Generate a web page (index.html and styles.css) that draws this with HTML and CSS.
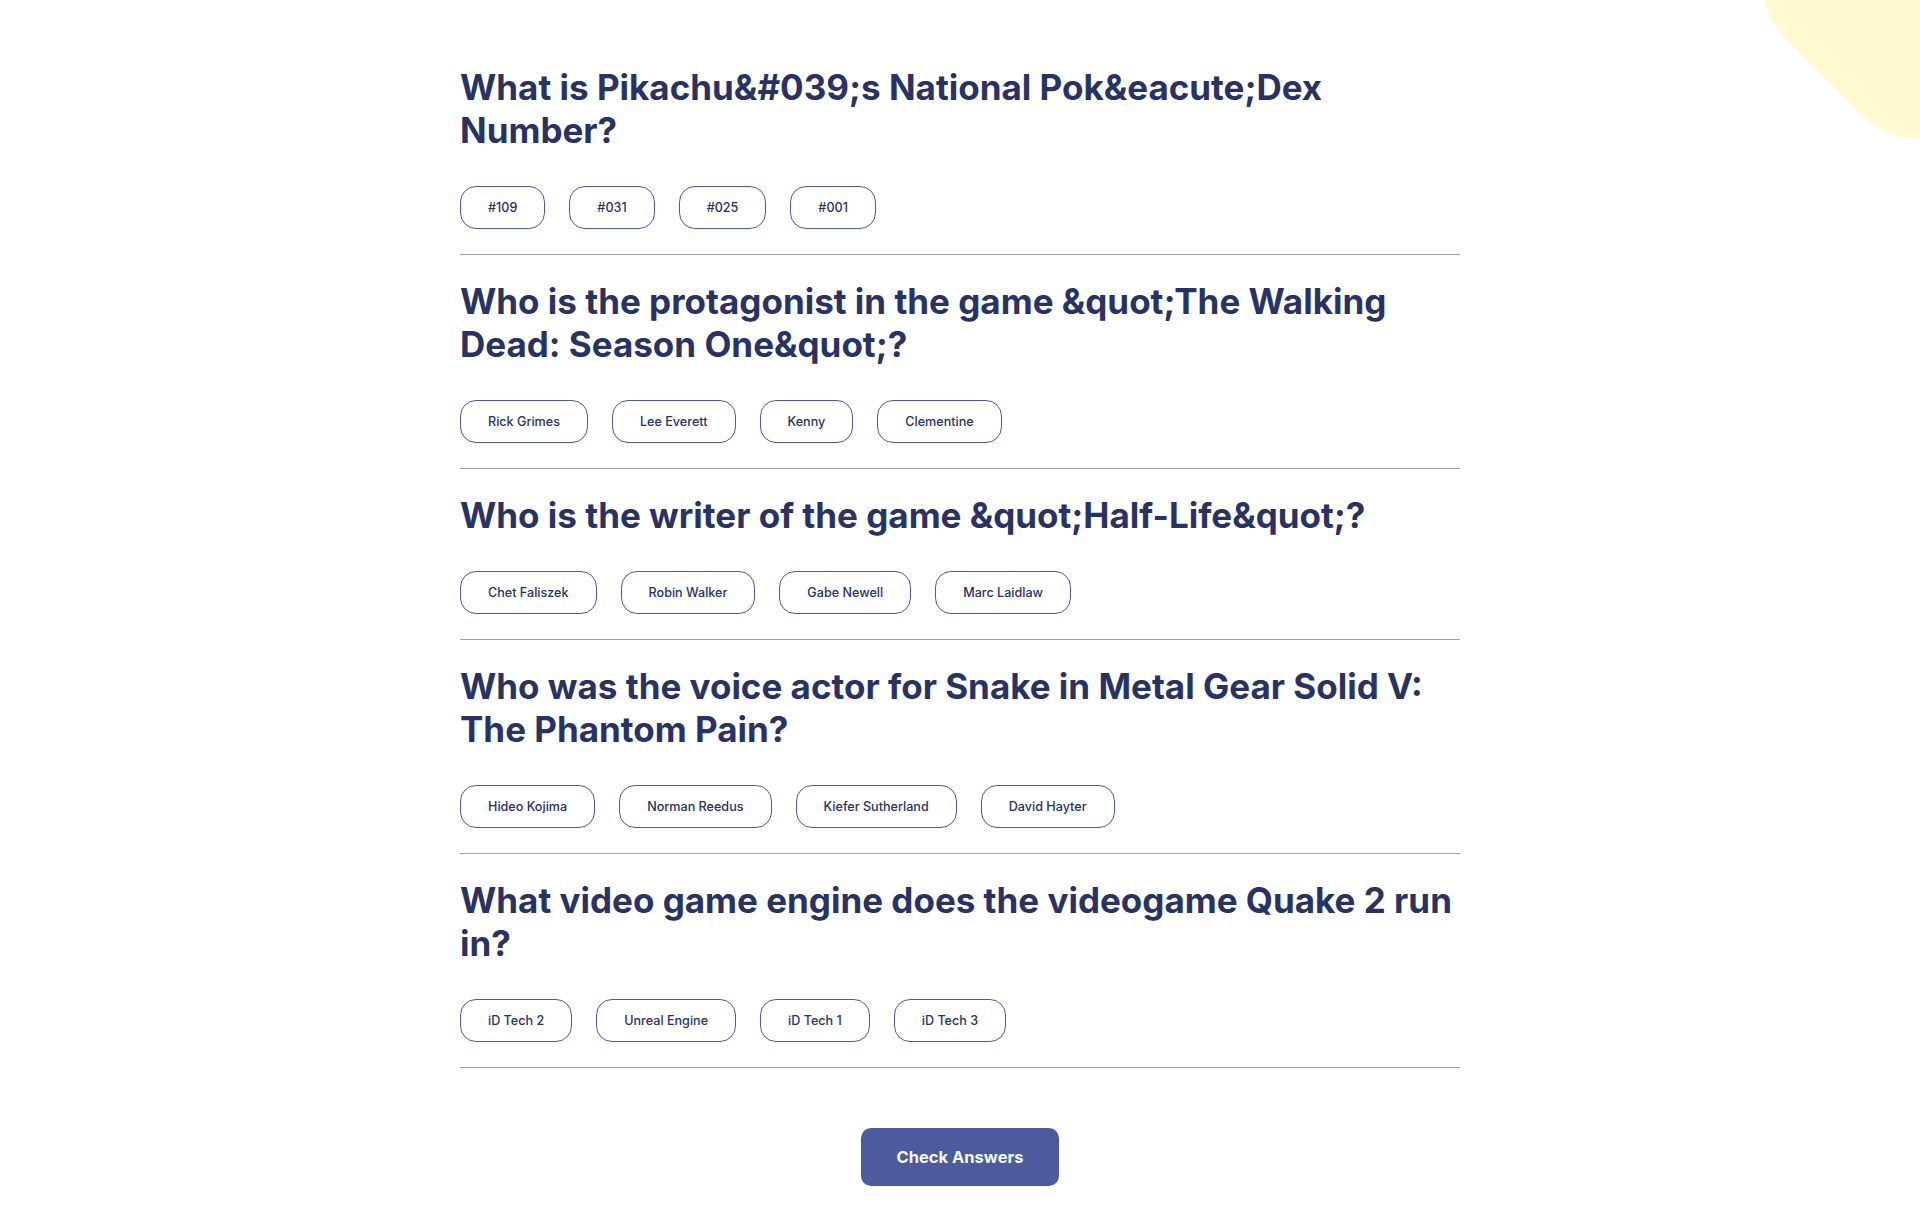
FILE: index.html
```html
<!DOCTYPE html>
<html lang="en">
<head>
<meta charset="utf-8">
<title>Quizzical</title>
<link rel="stylesheet" href="styles.css">
</head>
<body>
<svg class="blob" width="155" height="140" viewBox="0 0 155 140" aria-hidden="true">
  <path d="M0 0 C4 22 20 40 55 73 C80 97 100 125 128 134 C140 138 150 139 155 139 L155 0 Z" fill="#fffad1"/>
</svg>
<main class="quiz">
  <section class="question">
    <h2 class="question-title">What is Pikachu&amp;#039;s National Pok&amp;eacute;Dex Number?</h2>
    <div class="answers">
      <button class="answer">#109</button>
      <button class="answer">#031</button>
      <button class="answer">#025</button>
      <button class="answer">#001</button>
    </div>
  </section>
  <section class="question">
    <h2 class="question-title">Who is the protagonist in the game &amp;quot;The Walking Dead: Season One&amp;quot;?</h2>
    <div class="answers">
      <button class="answer">Rick Grimes</button>
      <button class="answer">Lee Everett</button>
      <button class="answer">Kenny</button>
      <button class="answer">Clementine</button>
    </div>
  </section>
  <section class="question">
    <h2 class="question-title">Who is the writer of the game &amp;quot;Half-Life&amp;quot;?</h2>
    <div class="answers">
      <button class="answer">Chet Faliszek</button>
      <button class="answer">Robin Walker</button>
      <button class="answer">Gabe Newell</button>
      <button class="answer">Marc Laidlaw</button>
    </div>
  </section>
  <section class="question">
    <h2 class="question-title">Who was the voice actor for Snake in Metal Gear Solid V: The Phantom Pain?</h2>
    <div class="answers">
      <button class="answer">Hideo Kojima</button>
      <button class="answer">Norman Reedus</button>
      <button class="answer">Kiefer Sutherland</button>
      <button class="answer">David Hayter</button>
    </div>
  </section>
  <section class="question">
    <h2 class="question-title">What video game engine does the videogame Quake 2 run in?</h2>
    <div class="answers">
      <button class="answer">iD Tech 2</button>
      <button class="answer">Unreal Engine</button>
      <button class="answer">iD Tech 1</button>
      <button class="answer">iD Tech 3</button>
    </div>
  </section>
  <div class="actions">
    <button class="check">Check Answers</button>
  </div>
</main>
</body>
</html>
```
FILE: styles.css
```css
html, body {
  margin: 0;
  padding: 0;
  background: #ffffff;
}

body {
  font-family: Inter, "Liberation Sans", sans-serif;
  color: #293264;
}

.blob {
  position: absolute;
  top: 0;
  right: 0;
  display: block;
}

.quiz {
  width: 1000px;
  margin: 0 auto;
  padding: 66px 0 30px;
  position: relative;
}

.question {
  padding: 25px 0;
  border-bottom: 1px solid #a2a2a2;
}

.question:first-child {
  padding-top: 0;
}

.question-title {
  margin: 0 0 34px;
  font-size: 35px;
  line-height: 43px;
  font-weight: 700;
  color: #293264;
}

.answers {
  display: flex;
  gap: 24px;
}

.answer {
  height: 43px;
  padding: 0 27px;
  border: 1px solid #4d5b9e;
  border-radius: 16px;
  background: #ffffff;
  color: #293264;
  font-family: Inter, "Liberation Sans", sans-serif;
  font-size: 12.6px;
  font-weight: 500;
  cursor: pointer;
}

.actions {
  display: flex;
  justify-content: center;
  padding-top: 60px;
}

.check {
  height: 58px;
  padding: 0 36px;
  border: none;
  border-radius: 10px;
  background: #4d5b9e;
  color: #f5f7fb;
  font-family: Inter, "Liberation Sans", sans-serif;
  font-size: 16.5px;
  font-weight: 700;
  cursor: pointer;
}
```
